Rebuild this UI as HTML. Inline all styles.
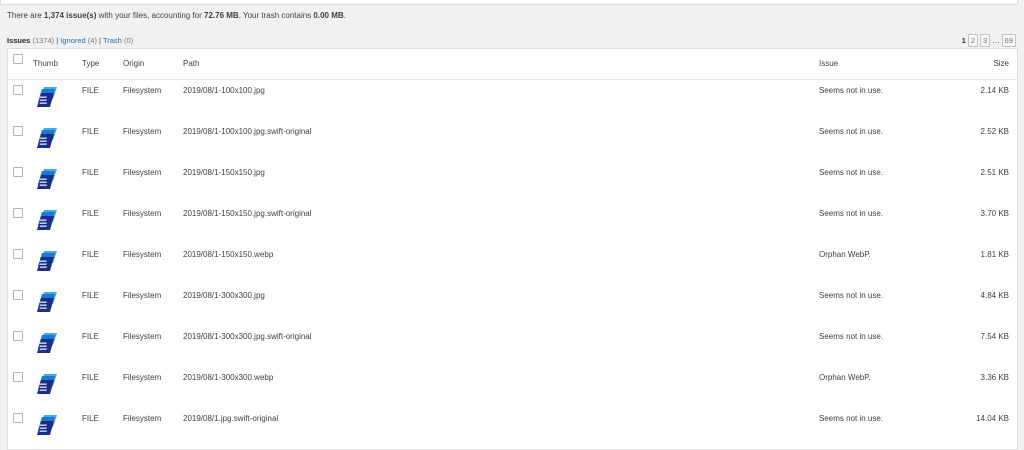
<!DOCTYPE html>
<html><head><style>
body{margin:0;background:#f1f1f1;font-family:"Liberation Sans",sans-serif;font-size:8px;color:#3c434a;width:1024px;height:438px;overflow:hidden;position:relative}
.top{position:absolute;left:0;top:-2px;width:1016px;height:6px;background:#fff;border:1px solid #dcdcde;border-top:none}
.info{position:absolute;left:7px;top:11px}
.tabs{position:absolute;left:7px;top:36px;font-size:7.5px}
.tabs a{color:#2271b1;text-decoration:none}
.pag{position:absolute;right:8px;top:34px;display:flex;gap:2px;align-items:center;font-size:7.5px}
.pag span{border:1px solid #c3c4c7;background:#f6f7f7;padding:1px 2px;color:#777}
.tbl{position:absolute;left:7px;top:48px;width:1009px;height:400px;background:#fff;border:1px solid #e0e0e0}
.row{position:absolute;left:0;width:1009px;height:41px}
.hdr{top:0;height:30px;border-bottom:1px solid #e2e2e2}
.c{position:absolute}
.cb{position:absolute;left:5px;width:8px;height:8px;border:1px solid #b5b5b5;background:#fff;border-radius:1px}
</style></head><body>
<div class="top"></div>
<div class="info">There are <b>1,374 issue(s)</b> with your files, accounting for <b>72.76 MB</b>. Your trash contains <b>0.00 MB</b>.</div>
<div class="tabs"><b style="color:#1d2327">Issues</b> <span style="color:#777">(1374)</span> | <a>Ignored</a> <span style="color:#777">(4)</span> | <a>Trash</a> <span style="color:#777">(0)</span></div>
<div class="pag"><b style="color:#333">1</b><span>2</span><span>3</span>…<span>69</span></div>
<div class="tbl">
<div class="row hdr"><div class="cb" style="top:5px"></div>
<div class="c" style="left:25px;top:10px">Thumb</div><div class="c" style="left:74px;top:10px">Type</div><div class="c" style="left:115px;top:10px">Origin</div><div class="c" style="left:175px;top:10px">Path</div><div class="c" style="left:811px;top:10px">Issue</div><div class="c" style="right:8px;top:10px">Size</div></div>
<div id="rows"></div>
</div>
<script>
var d=[["2019/08/1-100x100.jpg","Seems not in use.","2.14 KB"],["2019/08/1-100x100.jpg.swift-original","Seems not in use.","2.52 KB"],["2019/08/1-150x150.jpg","Seems not in use.","2.51 KB"],["2019/08/1-150x150.jpg.swift-original","Seems not in use.","3.70 KB"],["2019/08/1-150x150.webp","Orphan WebP.","1.81 KB"],["2019/08/1-300x300.jpg","Seems not in use.","4.84 KB"],["2019/08/1-300x300.jpg.swift-original","Seems not in use.","7.54 KB"],["2019/08/1-300x300.webp","Orphan WebP.","3.36 KB"],["2019/08/1.jpg.swift-original","Seems not in use.","14.04 KB"]];
var h="";d.forEach(function(r,i){var t=31+i*41;
h+='<div class="row" style="top:'+t+'px"><div class="cb" style="top:5px"></div>'+
'<svg class="c" style="left:28px;top:6px" width="22" height="22" viewBox="0 0 22 22"><polygon points="8,1 21,1 17,13 4,13" fill="#4aa8e8"/><polygon points="6,3 19,3 15,16 2,16" fill="#1e78d0"/><polygon points="5,7 18,7 14,21 1,21" fill="#1a2f8a"/><rect x="7" y="10.5" width="7" height="1.4" fill="#dde" transform="skewX(-17)" /><rect x="8" y="13.5" width="7" height="1.4" fill="#dde" transform="skewX(-17)"/><rect x="9" y="16.5" width="7" height="1.4" fill="#dde" transform="skewX(-17)"/></svg>'+
'<div class="c" style="left:74px;top:6px">FILE</div><div class="c" style="left:115px;top:6px">Filesystem</div><div class="c" style="left:175px;top:6px">'+r[0]+'</div><div class="c" style="left:811px;top:6px">'+r[1]+'</div><div class="c" style="right:8px;top:6px">'+r[2]+'</div></div>';});
document.getElementById("rows").innerHTML=h;
</script>
</body></html>
